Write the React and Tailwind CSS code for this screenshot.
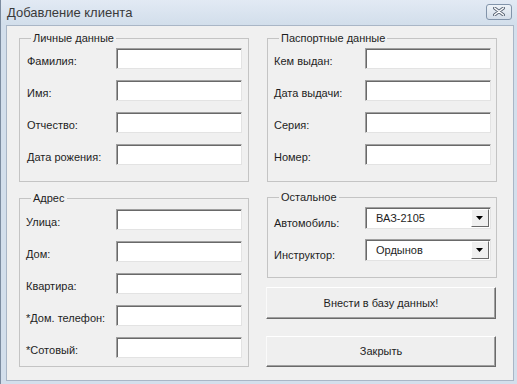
import { memo } from "react";

const font = { fontFamily: '"Liberation Sans", Arial, sans-serif' };

function TextBox() {
  return (
    <div className="w-[126px] h-[21px] shrink-0 bg-white border-t border-l border-t-[#a0a0a0] border-l-[#a0a0a0] border-r border-b border-r-[#e3e3e3] border-b-[#e3e3e3] shadow-[inset_1px_1px_0_#696969]" />
  );
}

function Field({ label }) {
  return (
    <div className="flex items-start justify-between h-[21px]">
      <span className="mt-[7px] text-[11px] leading-[13px] text-[#1e1e1e] whitespace-nowrap">{label}</span>
      <TextBox />
    </div>
  );
}

function Combo({ label, value }) {
  return (
    <div className="flex items-start justify-between h-[22px]">
      <span className="mt-[10px] text-[11px] leading-[13px] text-[#1e1e1e] whitespace-nowrap">{label}</span>
      <div className="w-[126px] h-[22px] shrink-0 flex items-stretch bg-white border-t border-l border-t-[#a0a0a0] border-l-[#a0a0a0] border-r border-b border-r-[#e3e3e3] border-b-[#e3e3e3] shadow-[inset_1px_1px_0_#696969] pl-[10px] pr-[1px] py-[1px]">
        <span className="flex-1 flex items-center text-[11px] leading-[13px] text-[#1e1e1e]">{value}</span>
        <div className="w-[18px] flex items-center justify-center bg-[#f0f0f0] border-t border-l border-t-white border-l-white border-r border-b border-r-[#696969] border-b-[#696969]">
          <svg width="8" height="4" viewBox="0 0 8 4">
            <path d="M0 0h7L3.5 4z" fill="#000" />
          </svg>
        </div>
      </div>
    </div>
  );
}

function Frame({ title, className, children }) {
  return (
    <div className={`relative border border-[#c4c4c4] ${className}`}>
      <span className="absolute -top-[8px] left-[11px] px-[2px] bg-[#f0f0f0] text-[11px] leading-[14px] text-[#1e1e1e]">
        {title}
      </span>
      {children}
    </div>
  );
}

function Button({ children, className }) {
  return (
    <button className={`w-full bg-[#efefef] border-t border-l border-t-white border-l-[#fafafa] border-r border-b border-r-[#6a6a6a] border-b-[#6a6a6a] shadow-[inset_-1px_-1px_0_#a0a0a0] text-[11px] text-[#1e1e1e] ${className}`}>
      {children}
    </button>
  );
}

function App() {
  return (
    <div style={font} className="w-[517px] h-[384px] flex flex-col bg-[#d3dfec] border-l border-[#7c8ca0] overflow-hidden">
      {/* Title bar */}
      <div className="h-[25px] shrink-0 flex items-center justify-between pl-[6px] pr-[6px] bg-gradient-to-b from-[#e2eaf4] to-[#d2deeb]">
        <span className="text-[13px] text-[#3a3a3a] mt-[1px]">Добавление клиента</span>
        <div className="w-[26px] h-[16px] mb-[2px] mr-[-1px] rounded-[3px] border border-[#8294aa] bg-gradient-to-b from-[#eef3f8] to-[#d4dee9] flex items-center justify-center">
          <svg width="12" height="9" viewBox="0 0 12 9">
            <path d="M1.5 1L10.5 8M10.5 1L1.5 8" stroke="#5a6575" strokeWidth="3.2" strokeLinecap="round" />
            <path d="M1.5 1L10.5 8M10.5 1L1.5 8" stroke="#ffffff" strokeWidth="1.4" strokeLinecap="round" />
          </svg>
        </div>
      </div>

      {/* Client area */}
      <div className="flex-1 ml-[5px] mr-[3px] mb-[3px] bg-[#f0f0f0] border border-[#a9b6c6] flex gap-[18px] pl-[12px] pr-[15px] pt-[12px]">
        {/* Left column */}
        <div className="w-[230px] flex flex-col gap-[16px]">
          <Frame title="Личные данные" className="h-[144px] pt-[9px] pl-[7px] pr-[6px]">
            <div className="flex flex-col gap-[11px]">
              <Field label="Фамилия:" />
              <Field label="Имя:" />
              <Field label="Отчество:" />
              <Field label="Дата рожения:" />
            </div>
          </Frame>
          <Frame title="Адрес" className="h-[169px] pt-[10px] pl-[6px] pr-[6px]">
            <div className="flex flex-col gap-[11px]">
              <Field label="Улица:" />
              <Field label="Дом:" />
              <Field label="Квартира:" />
              <Field label="*Дом. телефон:" />
              <Field label="*Сотовый:" />
            </div>
          </Frame>
        </div>

        {/* Right column */}
        <div className="w-[230px] flex flex-col">
          <Frame title="Паспортные данные" className="h-[144px] pt-[9px] pl-[6px] pr-[5px]">
            <div className="flex flex-col gap-[11px]">
              <Field label="Кем выдан:" />
              <Field label="Дата выдачи:" />
              <Field label="Серия:" />
              <Field label="Номер:" />
            </div>
          </Frame>
          <Frame title="Остальное" className="mt-[15px] h-[81px] pt-[9px] pl-[6px] pr-[5px]">
            <div className="flex flex-col gap-[10px]">
              <Combo label="Автомобиль:" value="ВАЗ-2105" />
              <Combo label="Инструктор:" value="Ордынов" />
            </div>
          </Frame>
          <Button className="mt-[9px] h-[32px] ml-[-1px]">Внести в базу данных!</Button>
          <Button className="mt-[17px] h-[31px] ml-[-1px]">Закрыть</Button>
        </div>
      </div>
    </div>
  );
}

export default memo(App);
